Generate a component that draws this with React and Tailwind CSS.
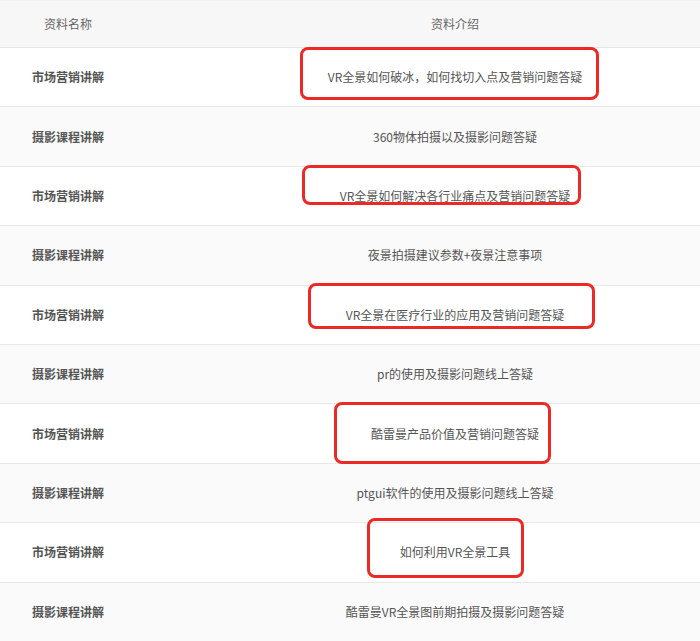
import React from 'react';

const ROWS = [
    { name: '市场营销讲解', intro: 'VR全景如何破冰，如何找切入点及营销问题答疑' },
    { name: '摄影课程讲解', intro: '360物体拍摄以及摄影问题答疑' },
    { name: '市场营销讲解', intro: 'VR全景如何解决各行业痛点及营销问题答疑' },
    { name: '摄影课程讲解', intro: '夜景拍摄建议参数+夜景注意事项' },
    { name: '市场营销讲解', intro: 'VR全景在医疗行业的应用及营销问题答疑' },
    { name: '摄影课程讲解', intro: 'pr的使用及摄影问题线上答疑' },
    { name: '市场营销讲解', intro: '酷雷曼产品价值及营销问题答疑' },
    { name: '摄影课程讲解', intro: 'ptgui软件的使用及摄影问题线上答疑' },
    { name: '市场营销讲解', intro: '如何利用VR全景工具' },
    { name: '摄影课程讲解', intro: '酷雷曼VR全景图前期拍摄及摄影问题答疑' },
];

// red annotation boxes drawn over the screenshot
const MARKS = [
    'left-[300px] top-[47px] w-[299px] h-[53px]',
    'left-[302px] top-[165px] w-[279px] h-[40px]',
    'left-[308px] top-[283px] w-[287px] h-[46px]',
    'left-[334px] top-[402px] w-[217px] h-[62px]',
    'left-[367px] top-[518px] w-[157px] h-[60px]',
];

export default function App() {
    return (
        <div className="relative w-[700px] h-[641px] overflow-hidden bg-white text-[12px]" style={{ fontFamily: '"Noto Sans CJK SC", "Noto Sans", sans-serif' }}>
            <div className="w-[774px] border-t border-[#f0f0f0]">
                <div className="flex h-[47px] items-center bg-[#f7f7f7] border-b border-[#e6e6e6] text-[#666]">
                    <div className="w-[136px] text-center">资料名称</div>
                    <div className="w-[638px] text-center">资料介绍</div>
                </div>
                {ROWS.map((row, i) => (
                    <div
                        key={i}
                        className={`flex h-[59.4px] items-center border-b border-[#e8e8e8] ${i % 2 === 1 ? 'bg-[#fafafa]' : 'bg-white'}`}
                    >
                        <div className="w-[136px] text-center font-bold text-[#555]">{row.name}</div>
                        <div className="w-[638px] text-center text-[#555]">{row.intro}</div>
                    </div>
                ))}
            </div>

            {MARKS.map((cls, i) => (
                <div key={i} className={`absolute ${cls} rounded-[8px] border-[3px] border-[#ec2a25]`} />
            ))}
        </div>
    );
}
